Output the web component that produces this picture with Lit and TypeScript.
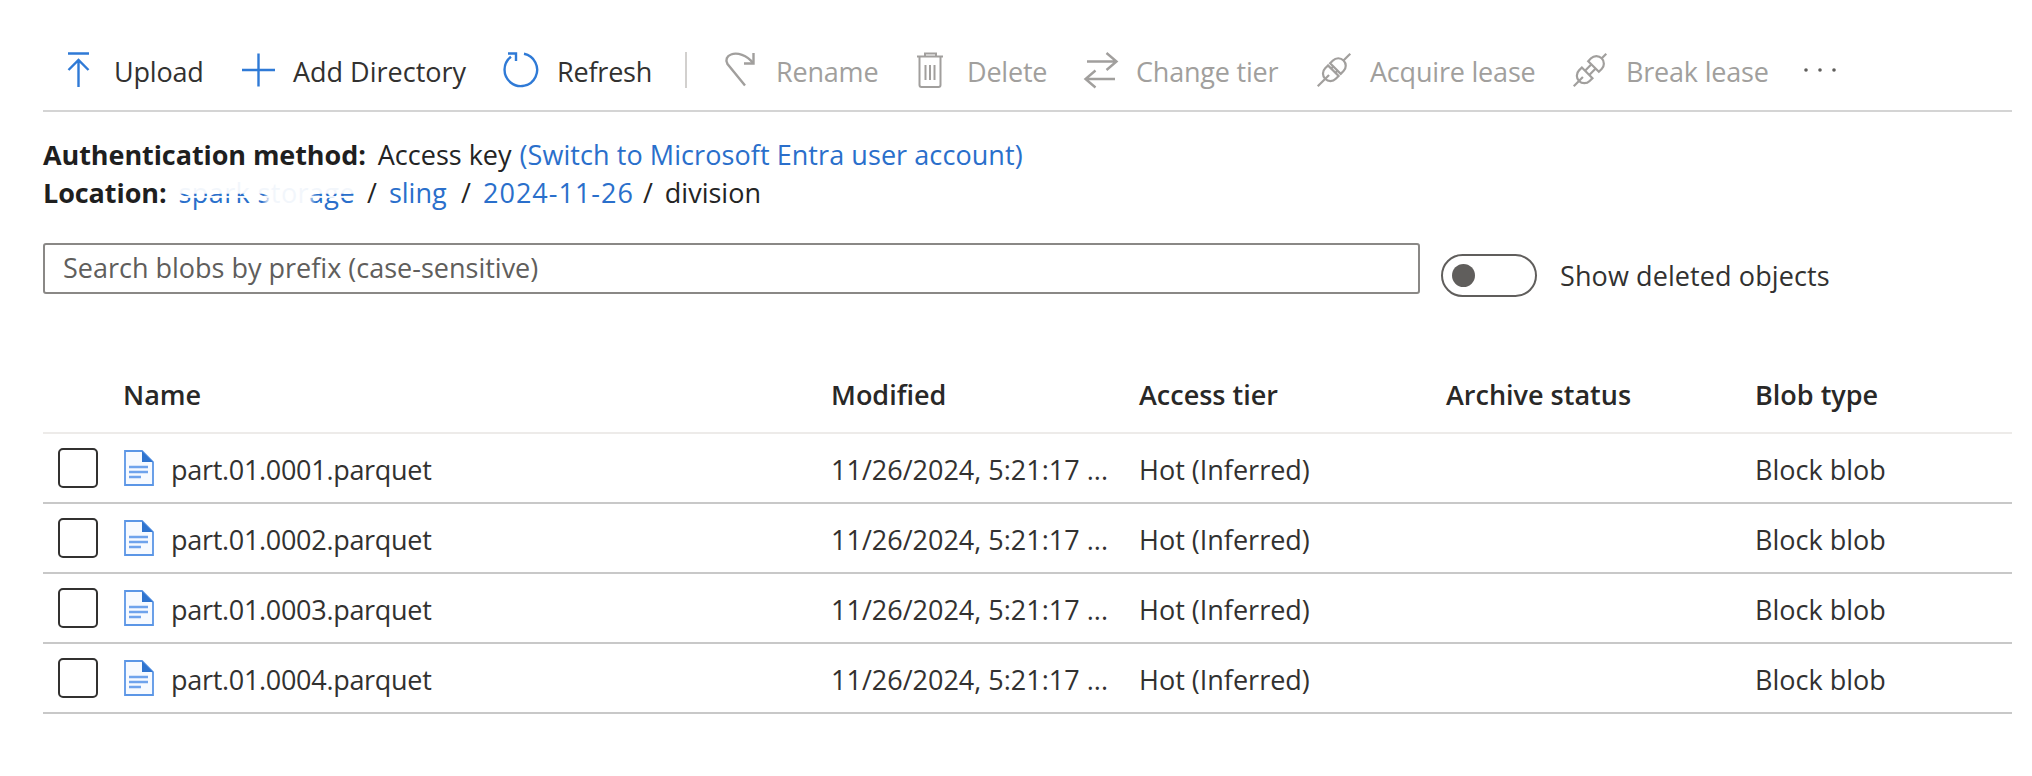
import { LitElement, html, css, svg } from "lit";
import { customElement } from "lit/decorators.js";

const plug = (gap: number) => svg`
  <g transform="rotate(-45 18 18)" fill="none" stroke="currentColor" stroke-width="2.2">
    <path d="M-5 18H${11 - gap}"/>
    <path d="M${17 - gap} 10.5H${13 - gap}A7.5 7.5 0 0 0 ${13 - gap} 25.5H${17 - gap}Z"/>
    <path d="M${20 + gap} 10.5H${24 + gap}A7.5 7.5 0 0 1 ${24 + gap} 25.5H${20 + gap}Z"/>
    <path d="M${31 + gap} 18H41"/>
    <path d="M${17 - gap} 15H${20 + gap}M${17 - gap} 21H${20 + gap}"/>
  </g>`;

const icons: Record<string, unknown> = {
  upload: svg`<path d="M8 1.5H29M18.5 35V8M8.5 18L18.5 8L28.5 18"/>`,
  add: svg`<path d="M3 18H36M19.5 1.5V34.5"/>`,
  refresh: svg`<path d="M21 1.8A16.3 16.3 0 1 1 8 4.8"/><path d="M5 1.5H13V9"/>`,
  rename: svg`<path d="M23 33.5L5.5 12C3 8 5 4 9 2.5C15 0 25 3 31 11"/><path d="M31.5 1V11.5H22"/>`,
  del: svg`<path d="M4 4.5H30M12 4.5V1.5H23V4.5M6.5 4.5V33A2 2 0 0 0 8.5 35H25.5A2 2 0 0 0 27.5 33V4.5M12.5 13V28M17 13V28M21.5 13V28" stroke-width="2"/>`,
  tier: svg`<path d="M5 9.5H34.5M24.5 1L34.5 9.5L24.5 18M33 27H3.5M13.5 18.5L3.5 27L13.5 35.5"/>`,
  acquire: plug(0),
  breakl: plug(3),
};

const tools = [
  { id: "upload", label: "Upload", off: false },
  { id: "add", label: "Add Directory", off: false },
  { id: "refresh", label: "Refresh", off: false },
  { id: "sep" },
  { id: "rename", label: "Rename", off: true },
  { id: "del", label: "Delete", off: true },
  { id: "tier", label: "Change tier", off: true },
  { id: "acquire", label: "Acquire lease", off: true },
  { id: "breakl", label: "Break lease", off: true },
];

const files = ["part.01.0001.parquet", "part.01.0002.parquet", "part.01.0003.parquet", "part.01.0004.parquet"];

@customElement("app-root")
export class AppRoot extends LitElement {
  static styles = css`
    :host {
      display: block;
      width: 2032px;
      height: 776px;
      box-sizing: border-box;
      padding: 0 20px 0 43px;
      background: #fff;
      color: #323130;
      font-family: "Open Sans", "Noto Sans", sans-serif;
      font-size: 27px;
      overflow: hidden;
    }
    .toolbar {
      display: grid;
      grid-template-columns: 179px 264px 183px 36px 191px 169px 234px 256px 228px 40px;
      align-items: center;
      height: 112px;
      box-sizing: border-box;
      padding: 51.5px 0 22.5px 17px;
      border-bottom: 2px solid #d4d4d4;
    }
    .tool {
      display: flex;
      align-items: center;
      gap: 18px;
      white-space: nowrap;
      height: 36px;
      letter-spacing: -0.2px;
    }
    .tool svg {
      width: 36px;
      height: 36px;
      flex: none;
      overflow: visible;
      fill: none;
      stroke: currentColor;
      stroke-width: 2.4;
      color: #2f7ad6;
    }
    .tool span { padding-top: 4px; }
    .tool.wide { letter-spacing: 0; }
    .tool.off { color: #a19f9d; }
    .tool.off svg { color: #a19f9d; }
    .sep {
      width: 2px;
      height: 36px;
      background: #d2d0ce;
      margin-left: -1px;
    }
    .dots { width: 40px; height: 8px; fill: #605e5c; }
    .info {
      margin-top: 24px;
      line-height: 38px;
      color: #242424;
      white-space: nowrap;
    }
    .info b { font-weight: 700; color: #1f1f1f; letter-spacing: -0.08px; }
    .info .row { display: flex; }
    a { color: #2a6fcb; text-decoration: none; }
    .key { margin-left: 12px; }
    .switch { margin-left: 8px; letter-spacing: 0.07px; }
    .slash { margin: 0 12px; }
    .mask { position: relative; margin-left: 12px; display: inline-block; letter-spacing: 0.4px; }
    .mask::after {
      content: "";
      position: absolute;
      inset: 0;
      background:
        linear-gradient(#fff 0 0) 0 0 / 100% 52% no-repeat,
        linear-gradient(100deg, transparent 0 48%, #fff 52% 72%, transparent 78%) 0 0 / 100% 100% no-repeat,
        linear-gradient(#fff 0 0) 0 62% / 100% 5% no-repeat;
      opacity: .94;
    }
    .sling { margin-right: 2.5px; }
    .num { letter-spacing: 1px; margin-right: -3px; }
    .search-row { display: flex; margin-top: 31px; height: 54px; }
    .search {
      box-sizing: border-box;
      width: 1377px;
      height: 51px;
      border: 2px solid #8a8886;
      border-radius: 3px;
      padding-left: 18px;
      line-height: 45px;
      color: #605e5c;
    }
    .toggle-wrap {
      display: flex;
      align-items: center;
      gap: 23px;
      margin: 11px 0 0 21px;
      letter-spacing: 0.1px;
    }
    .toggle {
      box-sizing: border-box;
      width: 96px;
      height: 43px;
      border: 2px solid #605e5c;
      border-radius: 22px;
      padding: 8px 9px;
    }
    .toggle i {
      display: block;
      width: 23px;
      height: 23px;
      border-radius: 50%;
      background: #605e5c;
    }
    .tr {
      display: grid;
      grid-template-columns: 80px 708px 308px 307px 309px 1fr;
      align-items: center;
      height: 70px;
      box-sizing: border-box;
      border-bottom: 2px solid #c8c8c8;
      white-space: nowrap;
    }
    .tr > .t, .name span { padding-top: 2px; }
    .tr.head {
      height: 76px;
      margin-top: 61px;
      padding-bottom: 2px;
      font-weight: 600;
      color: #292827;
      border-bottom-color: #edebe9;
    }
    .cb {
      box-sizing: border-box;
      width: 40px;
      height: 40px;
      margin-left: 15px;
      border: 2.5px solid #323130;
      border-radius: 5px;
    }
    .name { display: flex; align-items: center; gap: 17px; letter-spacing: -0.3px; }
    .file { width: 30px; height: 36px; flex: none; margin-left: 1px; }
  `;

  render() {
    return html`
      <div class="toolbar">
        ${tools.map((t) =>
          t.id === "sep"
            ? html`<div class="sep"></div>`
            : html`<div class="tool ${t.off ? "off" : ""} ${t.id === "add" ? "wide" : ""}">
                <svg viewBox="0 0 36 36">${icons[t.id]}</svg><span>${t.label}</span>
              </div>`
        )}
        <svg class="dots" viewBox="0 0 40 8">
          <circle cx="6" cy="4" r="1.8"></circle><circle cx="20" cy="4" r="1.8"></circle><circle cx="34" cy="4" r="1.8"></circle>
        </svg>
      </div>
      <div class="info">
        <div class="row"><b>Authentication method:</b><span class="key">Access key</span><a class="switch" href="#">(Switch to Microsoft Entra user account)</a></div>
        <div class="row"><b>Location:</b><a class="mask" href="#">spark storage</a><span class="slash">/</span><a class="sling" href="#">sling</a><span class="slash">/</span><a class="num" href="#">2024-11-26</a><span class="slash">/</span><span>division</span></div>
      </div>
      <div class="search-row">
        <div class="search">Search blobs by prefix (case-sensitive)</div>
        <div class="toggle-wrap">
          <div class="toggle"><i></i></div>
          <span>Show deleted objects</span>
        </div>
      </div>
      <div class="tr head">
        <div></div><div>Name</div><div>Modified</div><div>Access tier</div><div>Archive status</div><div>Blob type</div>
      </div>
      ${files.map(
        (f) => html`<div class="tr">
          <div class="cb"></div>
          <div class="name">
            <svg class="file" viewBox="0 0 30 36">
              <path d="M1 1H18L29 12V35H1Z" fill="#f7faff" stroke="#5b96e6" stroke-width="1.8"></path>
              <path d="M18 1L29 12H18Z" fill="#2f74cf"></path>
              <path d="M5 17H24M5 22H24M5 27H17" stroke="#6fa3ec" stroke-width="2.4" fill="none"></path>
            </svg>
            <span>${f}</span>
          </div>
          <div class="t">11/26/2024, 5:21:17 ...</div>
          <div class="t">Hot (Inferred)</div>
          <div></div>
          <div class="t">Block blob</div>
        </div>`
      )}
    `;
  }
}
